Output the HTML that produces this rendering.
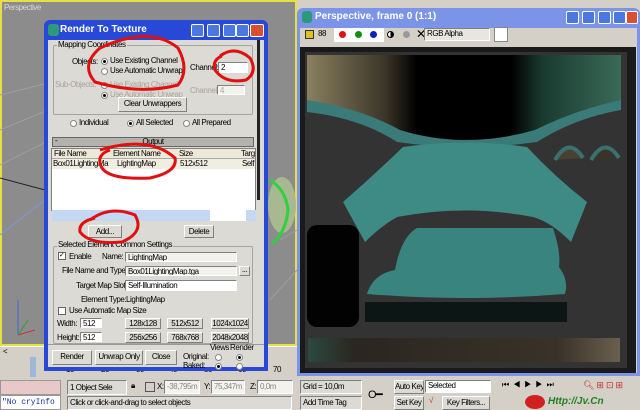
<!DOCTYPE html>
<html><head><meta charset="utf-8">
<style>
*{margin:0;padding:0;box-sizing:border-box}
body{width:640px;height:410px;overflow:hidden;background:#d4d0c8;font-family:"Liberation Sans",sans-serif;font-size:8px;letter-spacing:-0.45px;color:#000;position:relative}
.a{position:absolute;white-space:nowrap}
.btn{position:absolute;white-space:nowrap;overflow:hidden;background:#dcdad4;border:1px solid;border-color:#fff #808080 #808080 #fff;text-align:center;line-height:12px;font-size:8px}
.fld{position:absolute;white-space:nowrap;overflow:hidden;background:#f4f2ee;border:1px solid;border-color:#808080 #fff #fff #808080;line-height:9px;padding-left:2px;font-size:8px}
.rad{position:absolute;width:7px;height:7px;border-radius:50%;background:#fff;border:1px solid #888}
.rad.on::after{content:"";position:absolute;left:1px;top:1px;width:3px;height:3px;border-radius:50%;background:#000}
.grp{position:absolute;border:1px solid #a8a49c;border-radius:2px}
.gray{color:#a8a49c}
.tb{position:absolute;width:13px;height:13px;border:1px solid #fff;border-radius:2px;background:#4a78e0}
</style></head><body>
<!-- viewport -->
<div class="a" style="left:0;top:0;width:297px;height:346px;background:#8c8c8c;border:2px solid #e8e040"></div>
<div class="a" style="left:4px;top:3px;color:#d8d8d8;font-size:8px">Perspective</div>
<svg class="a" style="left:0;top:0" width="300" height="346">
<g stroke="#9e9e9e" stroke-width="1" fill="none">
<line x1="0" y1="95" x2="60" y2="80"/><line x1="0" y1="130" x2="60" y2="105"/><line x1="0" y1="165" x2="50" y2="140"/><line x1="280" y1="240" x2="297" y2="230"/><line x1="270" y1="300" x2="297" y2="270"/>
</g>
<line x1="0" y1="178" x2="45" y2="190" stroke="#222"/>
<line x1="0" y1="235" x2="45" y2="200" stroke="#7a9ad8"/>
<ellipse cx="282" cy="205" rx="14" ry="28" fill="#a8b890"/>
<path d="M270 180 Q286 190 288 210 Q286 232 272 244" stroke="#30d040" stroke-width="3" fill="none"/>
<line x1="18" y1="300" x2="18" y2="335" stroke="#4060e0"/><line x1="18" y1="335" x2="35" y2="330" stroke="#d03030"/><line x1="18" y1="335" x2="28" y2="320" stroke="#30a030"/>
</svg>
<!-- timeline -->
<div class="a" style="left:0;top:346px;width:297px;height:13px;background:#d4d0c8;border-top:1px solid #fff"></div>
<div class="a" style="left:3px;top:347px">&lt;</div>
<div class="a" style="left:0;top:359px;width:297px;height:19px;background:#d4d0c8"></div>
<div class="a" style="left:30px;top:357px;width:6px;height:20px;background:#9cb8d8"></div>
<div class="a" style="left:66px;top:365px">10</div><div class="a" style="left:101px;top:365px">20</div><div class="a" style="left:136px;top:365px">30</div><div class="a" style="left:169px;top:365px">40</div><div class="a" style="left:204px;top:365px">50</div><div class="a" style="left:238px;top:365px">60</div><div class="a" style="left:273px;top:365px">70</div>
<!-- status -->
<div class="a" style="left:0;top:380px;width:61px;height:15px;background:#e8c8c8;border:1px solid #999"></div>
<div class="a" style="left:0;top:395px;width:61px;height:15px;background:#fff;border:1px solid #999;font-family:'Liberation Mono',monospace;color:#1830a0;font-size:8px;letter-spacing:0;line-height:13px;padding-left:1px;overflow:hidden">"No cryInfo d</div>
<div class="fld" style="left:67px;top:380px;width:60px;height:15px;background:#dcdad4;line-height:13px">1 Object Sele</div>
<div class="a" style="left:131px;top:381px;font-size:8px">🔒︎</div>
<div class="a" style="left:145px;top:382px;width:10px;height:10px;border:1px solid #555"></div>
<div class="a" style="left:157px;top:382px">X:</div><div class="fld" style="left:164px;top:380px;width:36px;height:14px;color:#888;line-height:12px">-38,795m</div>
<div class="a" style="left:204px;top:382px">Y:</div><div class="fld" style="left:211px;top:380px;width:34px;height:14px;color:#888;line-height:12px">75,347m</div>
<div class="a" style="left:250px;top:382px">Z:</div><div class="fld" style="left:257px;top:380px;width:36px;height:14px;color:#888;line-height:12px">0,0m</div>
<div class="fld" style="left:67px;top:396px;width:225px;height:14px;background:#dcdad4;line-height:12px">Click or click-and-drag to select objects</div>
<!-- right bottom -->
<div class="fld" style="left:300px;top:380px;width:62px;height:14px;background:#dcdad4;line-height:12px">Grid = 10,0m</div>
<div class="fld" style="left:300px;top:396px;width:62px;height:14px;background:#dcdad4;line-height:12px">Add Time Tag</div>
<div class="a" style="left:368px;top:388px;font-size:11px">O━</div>
<div class="btn" style="left:394px;top:380px;width:30px;height:14px">Auto Key</div>
<div class="btn" style="left:394px;top:396px;width:30px;height:14px">Set Key</div>
<div class="fld" style="left:425px;top:380px;width:66px;height:13px;background:#fff">Selected</div>
<div class="a" style="left:429px;top:396px;color:#c03030">√</div>
<div class="btn" style="left:442px;top:396px;width:48px;height:14px">Key Filters...</div>
<div class="a" style="left:502px;top:380px;font-size:8px;letter-spacing:4px">⏮◀▶▶⏭</div>
<div class="a" style="left:583px;top:380px;font-size:9px;color:#c03030;letter-spacing:2px">🔍︎⊞⊡⊞</div>
<div class="a" style="left:525px;top:395px;width:20px;height:14px;border-radius:50%;background:#d02020"></div>
<div class="a" style="left:548px;top:396px;color:#208020;font-weight:bold;font-size:10px;letter-spacing:0;font-style:italic">Http://Jv.Cn</div>
<!-- perspective window -->
<div class="a" style="left:297px;top:8px;width:343px;height:368px;background:#7b94e8;border-radius:6px 6px 0 0"></div>
<div class="a" style="left:300px;top:28px;width:337px;height:345px;background:#d4d0c8"></div>
<div class="a" style="left:302px;top:11px;width:10px;height:12px;background:#2c9a7a;border-radius:3px"></div>
<div class="a" style="left:315px;top:11px;color:#fff;font-weight:bold;font-size:10px;letter-spacing:0">Perspective, frame 0 (1:1)</div>
<div class="tb" style="left:566px;top:11px"></div><div class="tb" style="left:582px;top:11px"></div><div class="tb" style="left:598px;top:11px"></div><div class="tb" style="left:613px;top:11px"></div><div class="tb" style="left:626px;top:11px;background:#d85030;width:12px"></div>
<div class="a" style="left:305px;top:30px;width:9px;height:9px;background:#e0c020;border:1px solid #333"></div>
<div class="a" style="left:318px;top:29px;font-size:8px">88</div>
<div class="a" style="left:334px;top:28px;width:50px;height:14px;background:#fff"></div>
<div class="a" style="left:339px;top:31px;width:7px;height:7px;border-radius:50%;background:#e01010"></div>
<div class="a" style="left:355px;top:31px;width:7px;height:7px;border-radius:50%;background:#109010"></div>
<div class="a" style="left:370px;top:31px;width:7px;height:7px;border-radius:50%;background:#1020c0"></div>
<div class="a" style="left:387px;top:31px;width:7px;height:7px;border-radius:50%;background:linear-gradient(90deg,#fff 50%,#000 50%);border:1px solid #000"></div>
<div class="a" style="left:403px;top:31px;width:7px;height:7px;border-radius:50%;background:#999"></div>
<div class="a" style="left:416px;top:27px;font-size:12px">✕</div>
<div class="fld" style="left:424px;top:28px;width:66px;height:13px;background:#e8e6e0">RGB Alpha</div>
<div class="a" style="left:494px;top:27px;width:14px;height:15px;background:#fff;border:1px solid #888"></div>
<div class="a" style="left:300px;top:47px;width:336px;height:326px;background:#1a1a1a"></div>
<svg class="a" style="left:305px;top:52px" width="322" height="316">
<defs>
<linearGradient id="tg" x1="0" x2="1"><stop offset="0" stop-color="#8a8060"/><stop offset=".25" stop-color="#3a3528"/><stop offset=".35" stop-color="#000"/><stop offset=".65" stop-color="#000"/><stop offset=".75" stop-color="#1a3a30"/><stop offset="1" stop-color="#3a6a58"/></linearGradient>
<linearGradient id="bg2" x1="0" x2="1"><stop offset="0" stop-color="#2a4a40"/><stop offset=".15" stop-color="#2a2620"/><stop offset=".8" stop-color="#3a3228"/><stop offset="1" stop-color="#6a6050"/></linearGradient>
</defs>
<rect width="322" height="316" fill="#333"/>
<path d="M2 3 H316 V50 Q270 60 230 80 Q160 100 95 80 Q55 58 2 50 Z" fill="url(#tg)"/>
<path d="M2 48 Q55 56 95 78 Q160 98 230 78 Q270 58 316 48 V58 Q270 66 232 90 Q160 100 92 90 Q55 66 2 60 Z" fill="#3a7a78"/>
<path d="M38 150 Q70 122 98 95 Q160 86 222 95 Q250 125 282 150 L266 190 Q246 170 228 165 Q160 152 92 165 Q76 174 60 190 Z" fill="#3e8a84"/>
<path d="M62 242 Q68 222 90 218 Q96 185 112 176 H248 Q256 200 254 215 Q264 228 260 242 Q160 250 62 242 Z" fill="#3a8480"/>
<rect x="60" y="250" width="202" height="20" fill="#0c1614"/>
<rect x="2" y="173" width="52" height="102" rx="10" fill="#020202"/>
<rect x="3" y="286" width="312" height="24" fill="url(#bg2)"/>
<path d="M250 108 Q264 84 278 106" stroke="#3a7070" stroke-width="4" fill="#4a4030"/>
<path d="M286 108 Q300 84 314 106" stroke="#3a7070" stroke-width="4" fill="#3a3428"/>
</svg>
<!-- Render To Texture dialog -->
<div class="a" style="left:44px;top:20px;width:224px;height:351px;background:#2848d8;border-radius:6px 6px 0 0"></div>
<div class="a" style="left:48px;top:40px;width:216px;height:327px;background:#dcdad4"></div>
<div class="a" style="left:257px;top:40px;width:3px;height:160px;background:#222"></div>
<div class="a" style="left:48px;top:24px;width:11px;height:12px;background:#2c9a7a;border-radius:3px"></div>
<div class="a" style="left:60px;top:24px;color:#fff;font-weight:bold;font-size:10px;letter-spacing:0">Render To Texture</div>
<div class="tb" style="left:191px;top:24px"></div><div class="tb" style="left:207px;top:24px"></div><div class="tb" style="left:223px;top:24px"></div><div class="tb" style="left:236px;top:24px"></div><div class="tb" style="left:250px;top:24px;background:#d85030;width:14px"></div>
<div class="grp" style="left:53px;top:45px;width:200px;height:70px"></div>
<div class="a" style="left:57px;top:40px;background:#dcdad4;padding:0 1px">Mapping Coordinates</div>
<div class="a" style="left:72px;top:57px">Objects:</div>
<div class="rad on" style="left:101px;top:58px"></div><div class="a" style="left:110px;top:56px">Use Existing Channel</div>
<div class="rad" style="left:101px;top:68px"></div><div class="a" style="left:110px;top:66px">Use Automatic Unwrap</div>
<div class="a" style="left:190px;top:63px">Channel:</div>
<div class="fld" style="left:218px;top:62px;width:30px;height:11px;background:#fff">2</div>
<div class="a gray" style="left:55px;top:80px">Sub-Objects:</div>
<div class="rad" style="left:101px;top:82px"></div><div class="a gray" style="left:110px;top:80px">Use Existing Channel</div>
<div class="rad on" style="left:101px;top:92px"></div><div class="a gray" style="left:110px;top:90px">Use Automatic Unwrap</div>
<div class="a gray" style="left:190px;top:86px">Channel:</div>
<div class="fld gray" style="left:217px;top:85px;width:28px;height:10px">4</div>
<div class="btn" style="left:118px;top:97px;width:69px;height:15px">Clear Unwrappers</div>
<div class="rad" style="left:70px;top:120px"></div><div class="a" style="left:79px;top:118px">Individual</div>
<div class="rad on" style="left:127px;top:120px"></div><div class="a" style="left:136px;top:118px">All Selected</div>
<div class="rad" style="left:183px;top:120px"></div><div class="a" style="left:192px;top:118px">All Prepared</div>
<div class="a" style="left:52px;top:137px;width:202px;height:10px;background:#b4b2ac;border:1px solid #666;text-align:center;line-height:8px">Output</div>
<div class="a" style="left:55px;top:136px">-</div>
<div class="a" style="left:51px;top:148px;width:205px;height:63px;background:#fff;border:1px solid #808080"></div>
<div class="a" style="left:52px;top:149px;width:203px;height:10px;background:#ece9d8;border-bottom:1px solid #aaa"></div>
<div class="a" style="left:54px;top:149px">File Name</div><div class="a" style="left:113px;top:149px">Element Name</div><div class="a" style="left:179px;top:149px">Size</div><div class="a" style="left:241px;top:149px">Targ</div>
<div class="a" style="left:52px;top:159px;width:203px;height:10px;background:#f0eee0"></div>
<div class="a" style="left:53px;top:159px;width:58px;overflow:hidden">Box01LightingMa</div><div class="a" style="left:117px;top:159px">LightingMap</div><div class="a" style="left:180px;top:159px">512x512</div><div class="a" style="left:242px;top:159px">Self</div>
<div class="a" style="left:52px;top:210px;width:204px;height:11px;background:#c4d8f4"></div>
<div class="a" style="left:210px;top:210px;width:36px;height:11px;background:#fff"></div>
<div class="btn" style="left:88px;top:225px;width:34px;height:13px">Add...</div>
<div class="btn" style="left:184px;top:225px;width:30px;height:13px">Delete</div>
<div class="grp" style="left:53px;top:246px;width:200px;height:98px"></div>
<div class="a" style="left:57px;top:240px;background:#dcdad4;padding:0 1px">Selected Element Common Settings</div>
<div class="a" style="left:58px;top:252px;width:8px;height:8px;background:#fff;border:1px solid #666;font-size:7px;line-height:6px">✓</div><div class="a" style="left:69px;top:252px">Enable</div>
<div class="a" style="left:102px;top:252px">Name:</div><div class="fld" style="left:125px;top:252px;width:112px;height:10px">LightingMap</div>
<div class="a" style="left:62px;top:266px">File Name and Type:</div><div class="fld" style="left:125px;top:266px;width:112px;height:10px">Box01LightingMap.tga</div>
<div class="btn" style="left:239px;top:266px;width:11px;height:10px;line-height:6px">...</div>
<div class="a" style="left:76px;top:281px">Target Map Slot:</div><div class="fld" style="left:125px;top:280px;width:112px;height:11px;background:#fff">Self-Illumination</div>
<div class="a" style="left:81px;top:295px">Element Type:</div><div class="a" style="left:126px;top:295px">LightingMap</div>
<div class="a" style="left:58px;top:307px;width:8px;height:8px;background:#fff;border:1px solid #666"></div><div class="a" style="left:69px;top:306px">Use Automatic Map Size</div>
<div class="a" style="left:57px;top:319px">Width:</div><div class="fld" style="left:80px;top:318px;width:22px;height:10px;background:#fff">512</div>
<div class="a" style="left:57px;top:333px">Height:</div><div class="fld" style="left:80px;top:332px;width:22px;height:10px;background:#fff">512</div>
<div class="btn" style="left:125px;top:318px;width:36px;height:11px;line-height:9px">128x128</div><div class="btn" style="left:167px;top:318px;width:36px;height:11px;line-height:9px">512x512</div><div class="btn" style="left:211px;top:318px;width:38px;height:11px;line-height:9px">1024x1024</div>
<div class="btn" style="left:125px;top:332px;width:36px;height:11px;line-height:9px">256x256</div><div class="btn" style="left:167px;top:332px;width:36px;height:11px;line-height:9px">768x768</div><div class="btn" style="left:211px;top:332px;width:38px;height:11px;line-height:9px">2048x2048</div>
<div class="a" style="left:48px;top:344px;width:216px;height:1px;background:#999"></div>
<div class="btn" style="left:52px;top:350px;width:40px;height:15px">Render</div>
<div class="btn" style="left:95px;top:350px;width:48px;height:15px">Unwrap Only</div>
<div class="btn" style="left:145px;top:350px;width:32px;height:15px">Close</div>
<div class="a" style="left:210px;top:343px">Views</div><div class="a" style="left:230px;top:343px">Render</div>
<div class="a" style="left:183px;top:352px">Original:</div><div class="a" style="left:183px;top:361px">Baked:</div>
<div class="rad" style="left:215px;top:354px"></div><div class="rad on" style="left:236px;top:354px"></div>
<div class="rad on" style="left:215px;top:363px"></div><div class="rad" style="left:236px;top:363px"></div>
<!-- red annotations -->
<svg class="a" style="left:0;top:0" width="300" height="260" fill="none" stroke="#e01010" stroke-width="3">
<path d="M100 48 Q150 25 178 48 Q190 70 178 85 Q140 95 95 82 Q80 65 100 48"/>
<path d="M220 56 Q235 45 250 58 Q258 72 246 80 Q225 84 215 70 Q212 60 222 56"/>
<path d="M100 150 Q150 135 175 158 Q178 172 150 178 Q110 180 102 168 Q95 155 110 150"/>
<path d="M90 220 Q110 205 135 215 Q145 232 122 242 Q90 245 80 232 Q78 222 95 218"/>
</svg>
</body></html>
